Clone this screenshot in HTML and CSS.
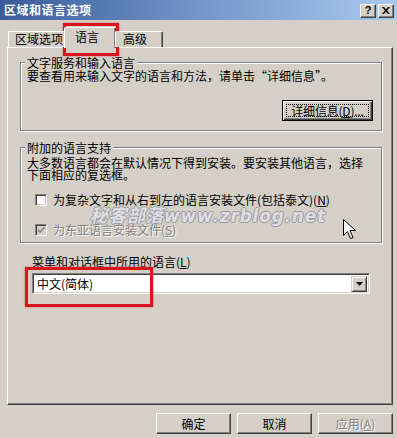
FILE: index.html
```html
<!DOCTYPE html>
<html lang="zh-CN">
<head>
<meta charset="utf-8">
<title>区域和语言选项</title>
<link rel="stylesheet" href="styles.css">
</head>
<body>
<div class="window">
  <div class="titlebar">
    <span class="title">区域和语言选项</span>
    <div class="tb-btns">
      <span class="tb-btn">?</span>
      <span class="tb-btn tb-x">
        <svg width="8" height="7" viewBox="0 0 8 7"><path d="M0 0h2l2 2.5L6 0h2L5 3.5 8 7H6L4 4.5 2 7H0l3-3.5z" fill="#000"/></svg>
      </span>
    </div>
  </div>

  <div class="tabs">
    <div class="tab t1">区域选项</div>
    <div class="tab tab-active">语言</div>
    <div class="tab t3">高级</div>
  </div>

  <div class="panel">
    <div class="group g1">
      <div class="group-title">文字服务和输入语言</div>
      <div class="line">要查看用来输入文字的语言和方法，请单击“详细信息”。</div>
      <div class="btn-row">
        <button class="btn btn-default"><span class="focus">详细信息(<u>D</u>)...</span></button>
      </div>
    </div>

    <div class="group g2">
      <div class="group-title">附加的语言支持</div>
      <div class="para">大多数语言都会在默认情况下得到安装。要安装其他语言，选择</div>
      <div class="para">下面相应的复选框。</div>
      <div class="check c1"><span class="box"></span><span>为复杂文字和从右到左的语言安装文件(包括泰文)(<u>N</u>)</span></div>
      <div class="check c2 disabled"><span class="box box-dis"><svg width="7" height="7" viewBox="0 0 7 7"><path d="M0 2l2 2 5-5v2L2 6 0 4z" fill="#808080"/></svg></span><span class="dis-text">为东亚语言安装文件(<u>S</u>)</span></div>
    </div>

    <div class="menu-label">菜单和对话框中所用的语言(<u>L</u>)</div>
    <div class="combo">
      <span class="combo-text">中文(简体)</span>
      <span class="combo-btn"><svg width="7" height="4" viewBox="0 0 7 4"><path d="M0 0h7L3.5 4z" fill="#000"/></svg></span>
    </div>
  </div>

  <div class="buttons">
    <button class="btn b-bottom">确定</button>
    <button class="btn b-bottom">取消</button>
    <button class="btn b-bottom dis-text">应用(<u>A</u>)</button>
  </div>

  <div class="watermark">秘客部落<span class="wm-latin">www.zrblog.net</span></div>
  <svg class="cursor" width="13" height="21" viewBox="0 0 13 21"><path d="M0.5 0.5v16l4-4 3 7 2.5-1-3-7h5.5z" fill="#fff" stroke="#000" stroke-width="1"/></svg>
  <div class="hl hl-tab"></div>
  <div class="hl hl-combo"></div>
</div>
</body>
</html>
```

FILE: styles.css
```css
* { box-sizing: border-box; }
html, body { margin: 0; padding: 0; }
body {
  width: 397px;
  height: 438px;
  background: #d4d0c8;
  font-family: "Noto Sans CJK SC", "Noto Sans", sans-serif;
  font-size: 12px;
  color: #000;
  overflow: hidden;
}
.window { position: relative; width: 397px; height: 438px; }

.titlebar {
  height: 20px;
  background: linear-gradient(to right, #3a5c9c 0%, #7395c9 50%, #a8caf0 100%);
  display: flex;
  align-items: center;
  justify-content: space-between;
  padding: 0 3px 0 4px;
}
.title { color: #fff; font-weight: bold; font-size: 12px; line-height: 14px; letter-spacing: 0.5px; }
.tb-btns { display: flex; gap: 2px; margin-top: 1px; }
.tb-btn {
  width: 16px; height: 14px;
  background: #d4d0c8;
  border: 1px solid; border-color: #fff #404040 #404040 #fff;
  box-shadow: inset -1px -1px 0 #808080;
  display: flex; align-items: center; justify-content: center;
  font-family: "Liberation Sans", sans-serif; font-weight: bold; font-size: 11px; line-height: 11px;
}

.tabs {
  display: flex;
  align-items: flex-end;
  height: 27px;
  padding-left: 8px;
  position: relative;
  z-index: 2;
}
.tab {
  height: 16px;
  border-top: 1px solid #fff;
  border-left: 1px solid #fff;
  border-right: 1px solid #404040;
  box-shadow: inset -1px 0 0 #808080;
  border-radius: 2px 2px 0 0;
  line-height: 14px;
  background: #d4d0c8;
  white-space: nowrap;
}
.t1 { width: 58px; padding-left: 6px; }
.tab-active {
  height: 21px;
  width: 52px;
  margin: 0 -1px -1px -2px;
  padding-left: 10px;
  padding-top: 1px;
  line-height: 16px;
}
.t3 { width: 48px; padding-left: 7px; }

.panel {
  margin-left: 7px;
  width: 386px;
  height: 358px;
  border-top: 1px solid #fff;
  border-left: 1px solid #fff;
  border-right: 1px solid #404040;
  border-bottom: 1px solid #404040;
  box-shadow: inset -1px -1px 0 #808080;
  padding: 14px 10px 0 12px;
}

.group {
  border: 1px solid #808080;
  box-shadow: inset 1px 1px 0 #fff, 1px 1px 0 #fff;
  padding: 0 6px;
}
.group-title {
  width: fit-content;
  margin: -7px 0 0 -2px;
  padding: 0 2px;
  background: #d4d0c8;
  line-height: 13px;
  height: 13px;
}
.g1 { height: 69px; }
.line { line-height: 13px; height: 13px; white-space: nowrap; }
.btn-row { display: flex; justify-content: flex-end; margin-top: 18px; padding-right: 2px; }

.btn {
  font-family: inherit;
  font-size: 12px;
  height: 21px;
  background: #d4d0c8;
  border: 1px solid; border-color: #fff #404040 #404040 #fff;
  box-shadow: inset -1px -1px 0 #808080;
  padding: 0;
  line-height: 17px;
  color: #000;
}
.btn-default {
  width: 91px;
  border: 1px solid #000;
  box-shadow: inset 1px 1px 0 #fff, inset -1px -1px 0 #404040, inset -2px -2px 0 #808080;
  padding: 3px 3px 3px 3px;
  line-height: 13px;
}
.focus { display: flex; justify-content: center; border: 1px dotted #000; line-height: 11px; height: 13px; white-space: nowrap; letter-spacing: -0.2px; }

.g2 { height: 96px; margin-top: 16px; }
.para { line-height: 12px; height: 12px; white-space: nowrap; }
.g2 .group-title + .para { margin-top: 3px; }
.check { display: flex; align-items: center; gap: 6px; height: 13px; line-height: 13px; padding-left: 8px; white-space: nowrap; }
.c1 { margin-top: 12px; }
.c2 { margin-top: 17px; }
.box {
  width: 12px; height: 12px; flex: none;
  background: #fff;
  border: 1px solid; border-color: #808080 #fff #fff #808080;
  box-shadow: inset 1px 1px 0 #404040, inset -1px -1px 0 #d4d0c8;
  display: flex; align-items: center; justify-content: center;
}
.box-dis { background: #d4d0c8; }
.box-dis svg { margin-top: 1px; }
.dis-text { color: #808080; text-shadow: 1px 1px 0 #fff; }

.menu-label { margin: 13px 0 0 12px; line-height: 12px; height: 12px; }
.combo {
  margin: 5px 0 0 12px;
  width: 338px; height: 21px;
  background: #fff;
  border: 1px solid; border-color: #808080 #fff #fff #808080;
  box-shadow: inset 1px 1px 0 #404040, inset -1px -1px 0 #d4d0c8;
  display: flex; align-items: center; justify-content: space-between;
  padding: 2px 2px 2px 4px;
}
.combo-text { line-height: 14px; }
.combo-btn {
  width: 16px; height: 16px;
  background: #d4d0c8;
  border: 1px solid; border-color: #d4d0c8 #404040 #404040 #d4d0c8;
  box-shadow: inset 1px 1px 0 #fff, inset -1px -1px 0 #808080;
  display: flex; align-items: center; justify-content: center;
}

.buttons {
  display: flex; justify-content: flex-end; gap: 6px;
  margin-top: 8px; padding-right: 4px;
}
.b-bottom { width: 75px; }

.watermark {
  position: absolute;
  left: 90px; top: 203px;
  font-size: 18px;
  font-weight: bold;
  font-style: italic;
  color: #dedee2;
  text-shadow: 1px 0 0 #9a9aa0, -1px 0 0 #9a9aa0, 0 1px 0 #9a9aa0, 0 -1px 0 #9a9aa0;
  line-height: 22px;
  white-space: nowrap;
  letter-spacing: 0.5px;
}
.wm-latin { font-family: "DejaVu Sans", sans-serif; font-size: 17px; letter-spacing: 0.8px; }
.cursor { position: absolute; left: 343px; top: 219px; }

.hl { position: absolute; border: 3px solid #d8141c; box-shadow: 0 0 2px #e06066; }
.hl-tab { left: 63px; top: 23px; width: 56px; height: 33px; }
.hl-combo { left: 25px; top: 267px; width: 128px; height: 40px; }
```
